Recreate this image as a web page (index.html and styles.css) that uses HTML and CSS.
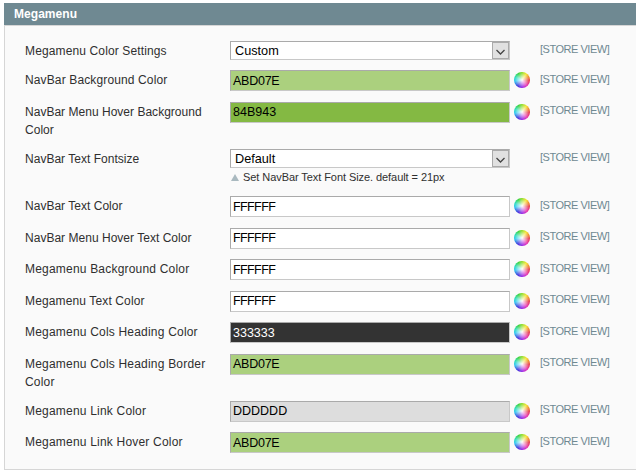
FILE: index.html
```html
<!DOCTYPE html>
<html lang="en">
<head>
<meta charset="utf-8">
<title>Megamenu</title>
<link rel="stylesheet" href="styles.css">
</head>
<body>
<section class="panel">
<h1 class="panel-title">Megamenu</h1>
<div class="settings">
  <div class="row first"><span class="label snug">Megamenu Color Settings</span><div class="select"><span>Custom</span><i class="arrow"><svg viewBox="0 0 15 15"><path d="M3.5 7 7.5 11 11.5 7"/></svg></i></div><i></i><span class="scope">[STORE VIEW]</span></div>
  <div class="row medium low"><span class="label snug">NavBar Background Color</span><div class="field green">ABD07E</div><i class="wheel"></i><span class="scope">[STORE VIEW]</span></div>
  <div class="row tall"><span class="label tight">NavBar Menu Hover Background Color</span><div class="field dark-green">84B943</div><i class="wheel"></i><span class="scope">[STORE VIEW]</span></div>
  <div class="row tall"><span class="label tight">NavBar Text Fontsize</span><div><div class="select"><span>Default</span><i class="arrow"><svg viewBox="0 0 15 15"><path d="M3.5 7 7.5 11 11.5 7"/></svg></i></div><p class="note">Set NavBar Text Font Size. default = 21px</p></div><i></i><span class="scope">[STORE VIEW]</span></div>
  <div class="row medium low"><span class="label tight">NavBar Text Color</span><div class="field white">FFFFFF</div><i class="wheel"></i><span class="scope">[STORE VIEW]</span></div>
  <div class="row"><span class="label tight">NavBar Menu Hover Text Color</span><div class="field white">FFFFFF</div><i class="wheel"></i><span class="scope">[STORE VIEW]</span></div>
  <div class="row medium low"><span class="label">Megamenu Background Color</span><div class="field white">FFFFFF</div><i class="wheel"></i><span class="scope">[STORE VIEW]</span></div>
  <div class="row"><span class="label snug">Megamenu Text Color</span><div class="field white">FFFFFF</div><i class="wheel"></i><span class="scope">[STORE VIEW]</span></div>
  <div class="row medium low"><span class="label">Megamenu Cols Heading Color</span><div class="field dark">333333</div><i class="wheel"></i><span class="scope">[STORE VIEW]</span></div>
  <div class="row tall"><span class="label">Megamenu Cols Heading Border Color</span><div class="field green">ABD07E</div><i class="wheel"></i><span class="scope">[STORE VIEW]</span></div>
  <div class="row"><span class="label">Megamenu Link Color</span><div class="field grey">DDDDDD</div><i class="wheel"></i><span class="scope">[STORE VIEW]</span></div>
  <div class="row low"><span class="label">Megamenu Link Hover Color</span><div class="field green">ABD07E</div><i class="wheel"></i><span class="scope">[STORE VIEW]</span></div>
</div>
</section>
</body>
</html>
```
FILE: styles.css
```css
* { box-sizing: border-box; }
body {
  margin: 0;
  background: #fff;
  font-family: "Liberation Sans", Arial, sans-serif;
  overflow: hidden;
}
.panel { margin: 3px 0 0 4px; }
.panel-title {
  margin: 0;
  height: 22px;
  padding-left: 10px;
  background: #6f8992;
  color: #fff;
  font-size: 12px;
  line-height: 22px;
  letter-spacing: 0.05px;
}
.settings {
  height: 445px;
  padding: 15px 0 0 20px;
  border: 1px solid #d6d6d6;
  border-right: 0;
  background: #fafafa;
}
.row {
  display: grid;
  grid-template-columns: 205px 280px 30px 80px;
  align-items: start;
  height: 31px;
}
.row.first { height: 29px; }
.row.medium { height: 32px; }
.row.tall { height: 47px; }
.label {
  width: 190px;
  padding-top: 1px;
  color: #2f2f2f;
  font-size: 12px;
  line-height: 18px;
  letter-spacing: 0.2px;
}
.label.snug { letter-spacing: 0.13px; }
.label.tight { letter-spacing: 0.02px; }
.scope {
  padding-top: 2px;
  color: #6f8992;
  font-size: 11px;
  line-height: 13px;
  letter-spacing: -0.48px;
  white-space: nowrap;
}
.low .scope { padding-top: 3px; }
.field {
  height: 21px;
  padding-left: 2px;
  border: 1px solid;
  border-color: #aaa #c8c8c8 #c8c8c8 #aaa;
  color: #000;
  font-size: 12.5px;
  line-height: 18px;
}
.low .field { line-height: 20px; }
.field.white { background: #fff; letter-spacing: -0.6px; }
.field.green { background: #abd07e; letter-spacing: -0.25px; }
.field.dark-green { background: #84b943; }
.field.dark { background: #333; color: #fff; }
.field.grey { background: #ddd; }
.select {
  display: flex;
  justify-content: space-between;
  height: 19px;
  padding-left: 4px;
  border: 1px solid;
  border-color: #aaa #c8c8c8 #c8c8c8 #aaa;
  background: #fff;
  color: #000;
  font-size: 12.7px;
  line-height: 18px;
}
.arrow {
  width: 17px;
  height: 17px;
  border: 1px solid #aaa;
  background: #e1e1e1;
}
.arrow svg {
  display: block;
  width: 15px;
  height: 15px;
  fill: none;
  stroke: #444;
  stroke-width: 1.3;
}
.note {
  display: flex;
  align-items: center;
  margin: 2px 0 0 1px;
  color: #2f2f2f;
  font-size: 11px;
  line-height: 15px;
  letter-spacing: -0.07px;
  white-space: nowrap;
}
.note::before {
  content: "";
  width: 0;
  height: 0;
  margin-right: 4px;
  border: solid transparent;
  border-width: 0 4px 7px;
  border-bottom-color: #a9b9bf;
}
.wheel {
  width: 16px;
  height: 16px;
  margin: 2px 0 0 4px;
  border-radius: 50%;
  background:
    radial-gradient(circle closest-side, #fff 0, rgba(255,255,255,.8) 20%, rgba(255,255,255,.4) 60%, rgba(255,255,255,0) 95%),
    conic-gradient(#8cdc28, #f5e62d 35deg, #f08c28 65deg, #e63246 95deg, #e632b4 140deg, #a028e6 175deg, #3c32dc 215deg, #28c8f0 262deg, #28dcb4 295deg, #32d23c 330deg, #8cdc28);
}
```
